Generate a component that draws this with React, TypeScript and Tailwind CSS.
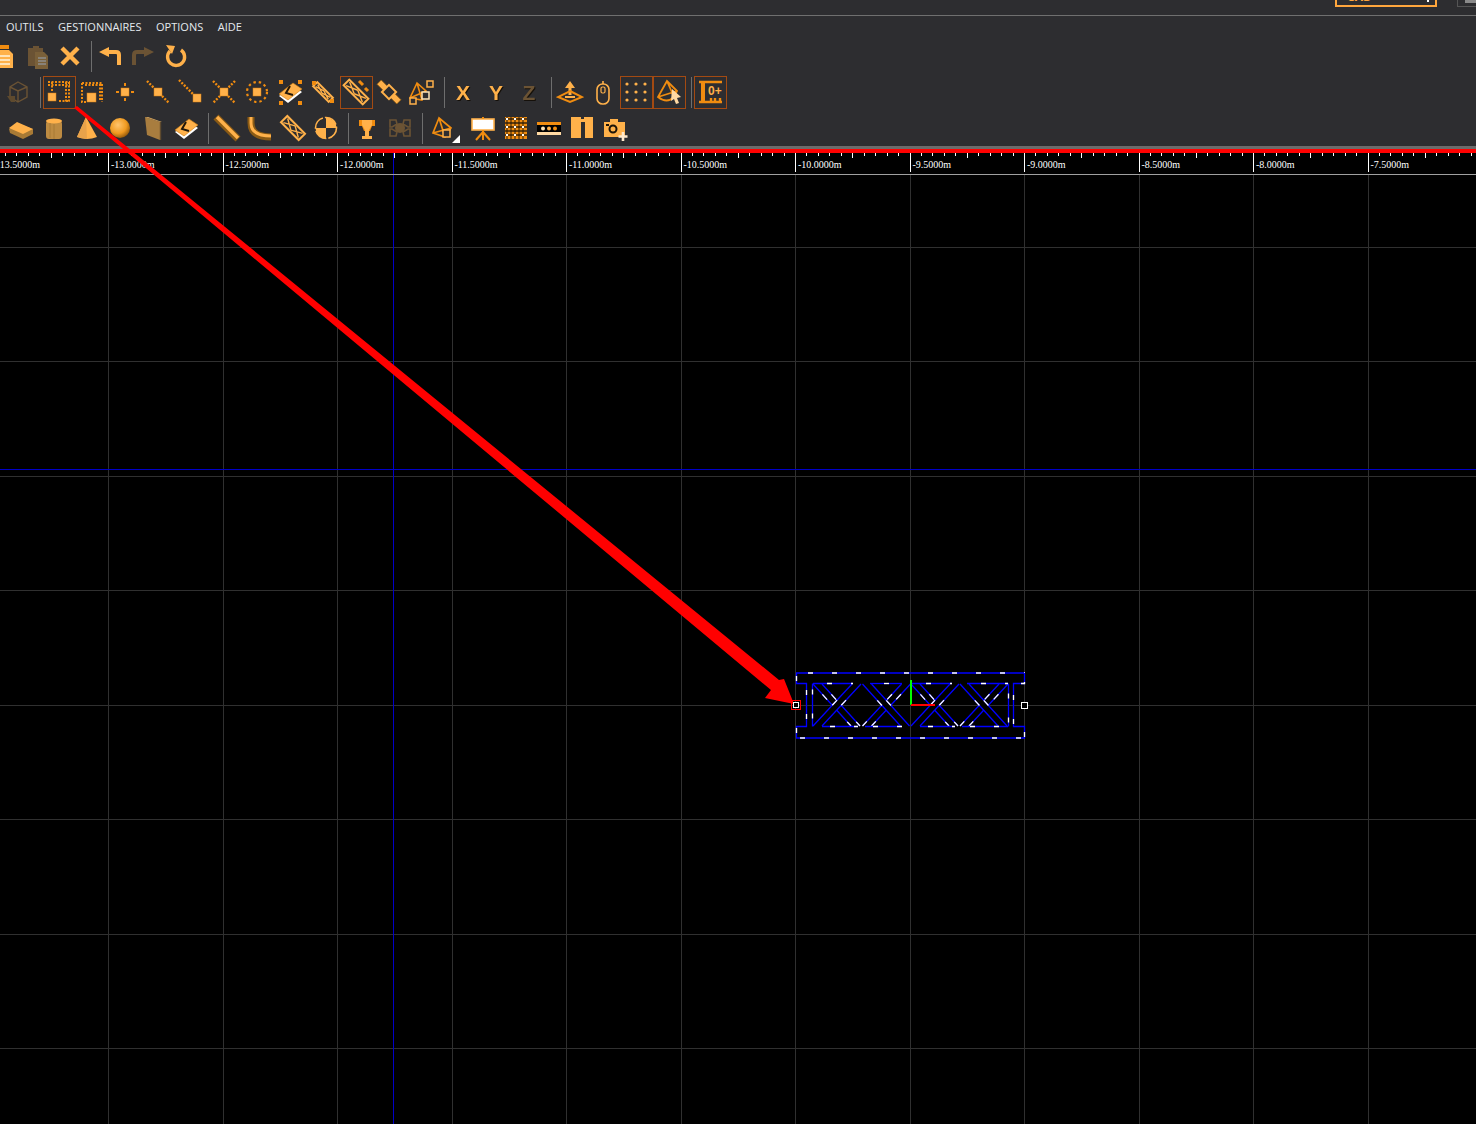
import type { ReactNode } from 'react';

const O = '#ffb14a';
const D = '#f08c10';
const B = '#6b5334';

const Ico = ({ children }: { children: ReactNode }) => (
  <svg viewBox="0 0 28 28" className="w-[28px] h-[28px] shrink-0">{children}</svg>
);

const Btn = ({ children, active, wide }: { children: ReactNode; active?: boolean; wide?: boolean }) => (
  <div className={`${wide ? 'w-[42px] justify-start pl-[5px]' : 'w-[33px] justify-center'} h-[33px] shrink-0 flex items-center border ${active ? 'border-[#a34a12]' : 'border-transparent'}`}>
    {children}
  </div>
);

const Sep = ({ tight }: { tight?: boolean }) => (
  <div className={`${tight ? 'w-[7px]' : 'w-[8px]'} h-[31px] shrink-0 flex justify-center pl-[3px]`}>
    <div className="w-px h-full bg-[#6e6e6e]" />
  </div>
);

const Letter = ({ c, off }: { c: string; off?: boolean }) => (
  <span className={`font-['Liberation_Sans'] font-bold text-[21px] leading-none drop-shadow-[1px_1px_0_#15100a] ${off ? 'text-[#6b5334]' : 'text-[#ffb14a]'}`}>{c}</span>
);

const Sq = ({ x, y, s = 8 }: { x: number; y: number; s?: number }) => <rect x={x} y={y} width={s} height={s} fill={O} stroke="#d98010" strokeWidth="0.5" />;
const Dot = (p: { d: string; w?: number }) => <path d={p.d} fill="none" stroke={D} strokeWidth={p.w ?? 2} strokeDasharray="2 1.5" />;

const Book = ({ corners }: { corners?: boolean }) => (
  <>
    <polygon points="3,18 17,8 26,14 12,25" fill="#fff" />
    <polygon points="3,16 17,5 26,11 12,22" fill={O} stroke="#c77a10" strokeWidth="0.6" />
    <path d="M14 8 L10 15 L17 17" fill="none" stroke="#23180a" strokeWidth="2" />
    {corners && (
      <>
        <rect x="3" y="2" width="4" height="4" fill={D} />
        <rect x="22" y="2" width="4" height="4" fill={D} />
        <rect x="3" y="23" width="4" height="4" fill={D} />
        <rect x="22" y="23" width="4" height="4" fill={D} />
      </>
    )}
  </>
);

// truss piece, drawn along the diagonal
const TrussIcon = ({ h = 10, len = 26 }: { h?: number; len?: number }) => {
  const l = 14 - len / 2;
  const r = 14 + len / 2;
  const t = 14 - h / 2 + 1.5;
  const b = 14 + h / 2 - 1.5;
  return (
    <g transform="rotate(45 14 14)">
      <rect x={l} y={14 - h / 2} width={len} height={h} fill="#2d2d30" stroke={O} strokeWidth="2" />
      <path d={`M${l + 2} ${t} L14 ${b} M14 ${t} L${l + 2} ${b} M14 ${t} L${r - 2} ${b} M${r - 2} ${t} L14 ${b}`} stroke={O} strokeWidth="1.4" />
    </g>
  );
};

const ConeOutline = () => (
  <path d="M12 3 L3 19 Q12 26 19 19 L22 13 Z M12 3 L19 19 M3 19 L22 13" fill="none" stroke={D} strokeWidth="1.8" />
);

function Toolbars() {
  return (
    <div className="flex flex-col">
      {/* row 1 */}
      <div className="h-[36px] flex items-center ml-[-12.5px]">
        <Btn>
          <Ico>
            <rect x="5" y="3" width="14" height="4" fill={D} />
            <path d="M5 8 H19 L23 12 V26 H5 Z" fill={O} />
            <path d="M9 14 H20 M9 18 H20 M9 22 H20" stroke="#fff3dd" strokeWidth="1.5" />
          </Ico>
        </Btn>
        <Btn>
          <Ico>
            <path d="M5 6 H10 V4 H16 V6 H20 V24 H5 Z" fill={B} />
            <path d="M12 10 H21 L25 14 V27 H12 Z" fill="#7a6039" />
            <path d="M15 16 H23 M15 19 H23 M15 22 H23" stroke="#8d8d8d" strokeWidth="1.5" />
          </Ico>
        </Btn>
        <Btn>
          <Ico>
            <path d="M6 6 L22 22 M22 6 L6 22" stroke={O} strokeWidth="4.4" />
          </Ico>
        </Btn>
        <Sep tight />
        <Btn>
          <Ico>
            <polygon points="3,10 13,5 13,15" fill={O} />
            <path d="M12 10 H20 Q23 10 23 13 V23" fill="none" stroke={O} strokeWidth="4" />
          </Ico>
        </Btn>
        <Btn>
          <Ico>
            <g transform="matrix(-1 0 0 1 28 0)">
              <polygon points="3,10 13,5 13,15" fill={B} />
              <path d="M12 10 H20 Q23 10 23 13 V23" fill="none" stroke={B} strokeWidth="4" />
            </g>
          </Ico>
        </Btn>
        <Btn>
          <Ico>
            <path d="M19 8 A8.5 8.5 0 1 1 8 9" fill="none" stroke={O} strokeWidth="3.4" />
            <polygon points="4,3 13,4 10,12" fill={O} />
          </Ico>
        </Btn>
      </div>
      {/* row 2 */}
      <div className="h-[36px] flex items-center ml-[1.5px]">
        <Btn>
          <Ico>
            <path d="M14 4 L23 9 V19 L14 24 L6 19 V9 Z M6 9 L14 13 L23 9 M14 13 V24" fill="none" stroke={B} strokeWidth="1.4" />
            <polygon points="3,18 11,18 11,24 7,24" fill="#5e4a2e" />
          </Ico>
        </Btn>
        <Sep />
        <Btn active>
          <Ico>
            <Dot d="M3 4 H25 M3 7 H25 M21 4 V25 M24 4 V25 M7 4 V14 M14 23 H25" />
            <Sq x={3} y={15} />
          </Ico>
        </Btn>
        <Btn>
          <Ico>
            <Dot d="M4 5 H24 V24 M4 5 V24 H9 M7 7 H22 V22" />
            <Sq x={9} y={15} s={9} />
          </Ico>
        </Btn>
        <Btn>
          <Ico>
            <Sq x={10} y={10} />
            <path d="M14 5 V8 M14 20 V23 M5 14 H8 M20 14 H23" stroke={D} strokeWidth="2" />
          </Ico>
        </Btn>
        <Btn>
          <Ico>
            <Dot d="M3 3 L10 10 M18 18 L25 25" w={2.4} />
            <Sq x={10} y={10} />
          </Ico>
        </Btn>
        <Btn>
          <Ico>
            <Dot d="M2 2 L16 16" w={2.4} />
            <Sq x={16} y={16} />
          </Ico>
        </Btn>
        <Btn>
          <Ico>
            <Dot d="M3 3 L10 10 M18 18 L25 25 M25 3 L18 10 M10 18 L3 25" w={2.4} />
            <Sq x={10} y={10} />
          </Ico>
        </Btn>
        <Btn>
          <Ico>
            <circle cx="14" cy="14" r="10" fill="none" stroke={D} strokeWidth="2.2" strokeDasharray="2.4 3" />
            <Sq x={10} y={10} />
          </Ico>
        </Btn>
        <Btn>
          <Ico>
            <Book corners />
          </Ico>
        </Btn>
        <Btn>
          <Ico>
            <TrussIcon h={6} len={22} />
            <rect x="3" y="3" width="4" height="4" fill={D} />
            <rect x="21" y="21" width="4" height="4" fill={D} />
          </Ico>
        </Btn>
        <Btn active>
          <Ico>
            <TrussIcon h={8} len={27} />
            <path d="M17 3 L21 7 M23 10 L26 13" stroke={D} strokeWidth="3" />
          </Ico>
        </Btn>
        <Btn>
          <Ico>
            <g transform="rotate(45 14 14)">
              <rect x="0" y="11" width="28" height="6" fill={O} stroke="#8a5a14" strokeWidth="0.8" />
            </g>
            <rect x="9" y="9" width="10" height="10" transform="rotate(45 14 14)" fill="#2d2d30" stroke={O} strokeWidth="2" />
          </Ico>
        </Btn>
        <Btn>
          <Ico>
            <path d="M9 5 L2 20 L14 22 L18 13 Z M9 5 L14 22 M2 20 L18 13" fill="none" stroke={D} strokeWidth="1.6" />
            <rect x="19" y="3" width="6" height="6" fill="#2d2d30" stroke={O} strokeWidth="1.5" />
            <rect x="14" y="14" width="7" height="7" fill="#2d2d30" stroke="#ffe3b5" strokeWidth="1.5" />
            <rect x="2" y="20" width="6" height="6" fill="#2d2d30" stroke={O} strokeWidth="1.5" />
          </Ico>
        </Btn>
        <Sep />
        <Btn><Letter c="X" /></Btn>
        <Btn><Letter c="Y" /></Btn>
        <Btn><Letter c="Z" off /></Btn>
        <Sep />
        <Btn>
          <Ico>
            <polygon points="14,3 19,10 15.5,10 15.5,17 12.5,17 12.5,10 9,10" fill={O} />
            <path d="M14 13 L26 19 L14 24 L2 19 Z" fill="none" stroke={D} strokeWidth="2" />
            <path d="M9 19 H19" stroke={O} strokeWidth="2" />
          </Ico>
        </Btn>
        <Btn>
          <Ico>
            <rect x="8" y="6" width="12" height="20" rx="5.5" fill="none" stroke={O} strokeWidth="1.6" />
            <path d="M14 3 V6" stroke={O} strokeWidth="1.6" />
            <rect x="12" y="9" width="4" height="6" rx="1.5" fill="none" stroke={O} strokeWidth="1.2" />
          </Ico>
        </Btn>
        <Btn active>
          <Ico>
            {[6, 14, 22].map((y) =>
              [5, 14, 23].map((x) => <circle key={`${x}-${y}`} cx={x} cy={y} r="1.6" fill={O} />)
            )}
          </Ico>
        </Btn>
        <Btn active>
          <Ico>
            <ConeOutline />
            <polygon points="17,11 26,19 22,20 24,25 21,26 19,21 16,23" fill="#ffd9a3" />
          </Ico>
        </Btn>
        <Sep />
        <Btn active>
          <Ico>
            <path d="M3 4 H26 M3 24 H26" stroke={D} strokeWidth="2.4" />
            <path d="M7 5 V24" stroke={D} strokeWidth="4" />
            <path d="M15 24 V20 M19 24 V20 M24 24 V20" stroke={D} strokeWidth="2.4" />
            <text x="12" y="17" className="font-['Liberation_Sans'] font-bold text-[12px]" fill={O}>0+</text>
          </Ico>
        </Btn>
      </div>
      {/* row 3 */}
      <div className="h-[36px] flex items-center ml-[4.5px]">
        <Btn>
          <Ico>
            <polygon points="2,15 10,9 26,15 26,20 16,25 3,19" fill="#a87a35" />
            <polygon points="2,14 10,8 26,15 16,20" fill={O} />
          </Ico>
        </Btn>
        <Btn>
          <Ico>
            <rect x="6" y="7" width="16" height="18" rx="3" fill="#bd8b42" />
            <ellipse cx="14" cy="7" rx="8" ry="2.6" fill={O} />
            <path d="M10 9 V24 M14 10 V25" stroke="#a87a35" strokeWidth="1" />
          </Ico>
        </Btn>
        <Btn>
          <Ico>
            <path d="M13 3 L4 23 Q14 27 24 23 Z" fill={O} />
            <path d="M13 3 L14 25 L4 23 Z" fill="#e8a24a" />
          </Ico>
        </Btn>
        <Btn>
          <Ico>
            <defs>
              <radialGradient id="sph" cx="0.4" cy="0.35" r="0.7">
                <stop offset="0" stopColor="#ffc56e" />
                <stop offset="0.6" stopColor="#f09a20" />
                <stop offset="1" stopColor="#8a5208" />
              </radialGradient>
            </defs>
            <circle cx="14" cy="14" r="10" fill="url(#sph)" />
          </Ico>
        </Btn>
        <Btn>
          <Ico>
            <polygon points="6,3 21,8 21,26 8,21" fill="#a87d3f" />
            <polygon points="6,3 9,3 23,8 21,8" fill="#d8a860" />
            <path d="M21.5 8 V26" stroke="#5e4a2e" strokeWidth="1.4" />
          </Ico>
        </Btn>
        <Btn>
          <Ico>
            <Book />
          </Ico>
        </Btn>
        <Sep />
        <Btn>
          <Ico>
            <path d="M3 3 L25 25" stroke="#8a5a14" strokeWidth="7" />
            <path d="M4 3 L25 24" stroke={O} strokeWidth="3.5" />
          </Ico>
        </Btn>
        <Btn>
          <Ico>
            <path d="M5 3 V9 Q5 23 25 23" fill="none" stroke="#8a5a14" strokeWidth="7" />
            <path d="M5 3 V9 Q5 22 25 22" fill="none" stroke={O} strokeWidth="3" />
          </Ico>
        </Btn>
        <Btn>
          <Ico>
            <TrussIcon h={9} len={25} />
          </Ico>
        </Btn>
        <Btn>
          <Ico>
            <circle cx="14" cy="14" r="10.5" fill="#2d2d30" stroke={O} strokeWidth="1.6" strokeDasharray="14 2" />
            <path d="M14 14 V3.5 A10.5 10.5 0 0 1 24.5 14 Z M14 14 V24.5 A10.5 10.5 0 0 1 3.5 14 Z" fill={O} />
          </Ico>
        </Btn>
        <Sep />
        <Btn>
          <Ico>
            <path d="M6 6 H22 V12 H19 L17 17 H11 L9 12 H6 Z" fill={D} />
            <path d="M9 6 H19 V11 L16 16 H12 L9 11 Z" fill={O} />
            <rect x="12" y="16" width="4" height="6" fill={O} />
            <rect x="9" y="22" width="10" height="3" fill={O} />
          </Ico>
        </Btn>
        <Btn>
          <Ico>
            <circle cx="14" cy="14" r="5" fill={B} />
            <path d="M4 6 H10 L11 10 L6 13 H4 Z M24 6 H18 L17 10 L22 13 H24 Z M4 22 H10 L11 18 L6 15 H4 Z M24 22 H18 L17 18 L22 15 H24 Z" fill="none" stroke={B} strokeWidth="1.6" />
          </Ico>
        </Btn>
        <Sep />
        <Btn wide>
          <div className="relative w-[28px] h-[28px]">
            <Ico>
              <path d="M8 4 L2 19 L14 23 L20 14 Z M8 4 L14 23 M2 19 L20 14" fill="none" stroke={D} strokeWidth="1.7" />
              <rect x="12" y="16" width="7" height="7" fill="#2d2d30" stroke={O} strokeWidth="1.5" />
            </Ico>
            <div className="absolute left-[21px] bottom-[-1px] w-0 h-0 border-l-[8px] border-l-transparent border-b-[8px] border-b-white" />
          </div>
        </Btn>
        <Btn>
          <Ico>
            <rect x="3" y="5" width="22" height="11" fill="#fff" stroke={O} strokeWidth="1.6" />
            <path d="M14 3 V5 M14 16 V26 M14 18 L7 26 M14 18 L21 26" stroke={D} strokeWidth="2" />
          </Ico>
        </Btn>
        <Btn>
          <Ico>
            <rect x="3" y="3" width="22" height="22" fill={D} />
            {[5, 9, 13, 17, 21].map((y) => <path key={y} d={`M3 ${y} H25`} stroke="#2a1c08" strokeWidth="1.4" />)}
            {[5, 9, 13, 17, 21].map((x) => <path key={x} d={`M${x} 3 V25`} stroke="#2a1c08" strokeWidth="1" />)}
            {[5, 13, 21].map((y) => [5, 13, 21].map((x) => <rect key={`${x}-${y}`} x={x - 1} y={y - 1} width="2" height="2" fill="#fff" />))}
          </Ico>
        </Btn>
        <Btn>
          <Ico>
            <rect x="2" y="8" width="24" height="13" fill="#000" />
            <rect x="2" y="8" width="24" height="3" fill={D} />
            <rect x="2" y="18" width="24" height="3" fill="#ffd9a3" />
            <circle cx="8" cy="14.5" r="2" fill="#ffe3b5" />
            <circle cx="14" cy="14.5" r="2" fill={O} />
            <circle cx="20" cy="14.5" r="2" fill={D} />
          </Ico>
        </Btn>
        <Btn>
          <Ico>
            <path d="M3 3 H13 V5 H16 V3 H25 V24 H17 V8 H13 V24 H3 Z" fill={O} />
          </Ico>
        </Btn>
        <Btn>
          <Ico>
            <path d="M3 8 H9 V5 H17 V8 H24 V23 H3 Z" fill={O} />
            <circle cx="12" cy="15" r="3.5" fill={O} stroke="#1d1408" strokeWidth="2" />
            <rect x="5" y="10" width="3" height="2" fill="#1d1408" />
            <path d="M22 18 V27 M17.5 22.5 H26.5" stroke="#ffe9cc" strokeWidth="2.6" />
          </Ico>
        </Btn>
      </div>
    </div>
  );
}

const PITCH = 114.5;
const majors = Array.from({ length: 13 }, (_, i) => -6 + i * PITCH);
const labels = ['-13.5000m', '-13.0000m', '-12.5000m', '-12.0000m', '-11.5000m', '-11.0000m', '-10.5000m', '-10.0000m', '-9.5000m', '-9.0000m', '-8.5000m', '-8.0000m', '-7.5000m'];
const px = (n: number) => Math.floor(n) + 0.5;

function Ruler() {
  const ticks: number[] = [];
  for (let i = 0; i < 140; i++) ticks.push(i);
  return (
    <svg viewBox="0 153 1476 22" className="block w-[1476px] h-[22px] shrink-0 bg-black" shapeRendering="crispEdges">
      {ticks.map((i) => {
        const x = px(-6 + (i * PITCH) / 10);
        if (i % 10 === 0) return null;
        return <path key={i} d={`M${x} 153 V${i % 5 === 0 ? 158 : 156}`} stroke="#fff" />;
      })}
      {majors.map((m, i) => (
        <g key={i}>
          <path d={`M${px(m)} 153 V172`} stroke="#fff" />
          <text x={m + 2.4} y={168} fill="#fff" className="font-['Liberation_Serif'] text-[10px]" shapeRendering="auto">{labels[i]}</text>
        </g>
      ))}
      <path d="M393.5 153 V174" stroke="#0000c8" />
      <path d="M0 174.5 H1476" stroke="#a0a0a0" />
    </svg>
  );
}

// each brace: left edge, which diagonal pair lies on top, top and bottom chord pieces
const crosses = [
  { x: 813, slashOver: true, top: [813, 853], bottom: [822, 858] },
  { x: 862.5, slashOver: false, top: [870, 902], bottom: [865, 902] },
  { x: 911, slashOver: true, top: [912, 952], bottom: [920, 955] },
  { x: 960, slashOver: false, top: [967, 1008], bottom: [962, 1008] },
];

const Line = ({ d, dash = '5 19', off = 0, w = 1.3 }: { d: string; dash?: string; off?: number; w?: number }) => (
  <>
    <path d={d} fill="none" stroke="#0000ff" strokeWidth={w} />
    <path d={d} fill="none" stroke="#fff" strokeWidth={w} strokeDasharray={dash} strokeDashoffset={off} />
  </>
);

function Cross({ x, slashOver, top, bottom }: { x: number; slashOver: boolean; top: number[]; bottom: number[] }) {
  const t = 684;
  const b = 726;
  const back = `M${x} ${t} L${x + 38} ${b} M${x + 9} ${t} L${x + 47} ${b}`;
  const slash = `M${x + 39} ${t} L${x} ${b} M${x + 48} ${t} L${x + 9} ${b}`;
  const over = slashOver ? slash : back;
  const under = slashOver ? back : slash;
  const mask = slashOver
    ? `${x + 39},${t} ${x + 48},${t} ${x + 9},${b} ${x},${b}`
    : `${x},${t} ${x + 9},${t} ${x + 47},${b} ${x + 38},${b}`;
  return (
    <g>
      <Line d={under} dash="7 30" off={-14} />
      <polygon points={mask} fill="#000" />
      <Line d={over} dash="7 30" off={-22} />
      <Line d={`M${top[0]} 683.5 H${top[1]}`} off={-14} />
      <Line d={`M${bottom[0]} 726.5 H${bottom[1]}`} off={-8} />
    </g>
  );
}

function Viewport() {
  const hs = [247, 361, 476, 590, 705, 819, 934, 1048];
  return (
    <svg viewBox="0 175 1476 949" className="block w-[1476px] h-[949px] bg-black">
      <g shapeRendering="crispEdges">
        {majors.map((m) => <path key={m} d={`M${px(m)} 175 V1124`} stroke="#303030" />)}
        {hs.map((y) => <path key={y} d={`M0 ${y + 0.5} H1476`} stroke="#303030" />)}
        <path d="M393.5 175 V1124 M0 469.5 H1476" stroke="#0000c8" />
      </g>
      {/* truss outline */}
      <Line d="M796 673 H1025" w={1.7} off={-12} />
      <Line d="M796 738 H1025" w={1.7} off={-4} />
      <Line d="M796.5 673 V683.5 H806.5 V726.5 H796.5 V738" off={-3} />
      <Line d="M1024.5 673 V683.5 H1013.5 V726.5 H1024.5 V738" off={-9} />
      <Line d="M812.5 683.5 V726.5" off={-6} />
      <Line d="M1008.5 683.5 V726.5" off={-10} />
      {crosses.map((c) => <Cross key={c.x} {...c} />)}
      <path d="M910.5 680 V705" stroke="#00ff00" strokeWidth="2" shapeRendering="crispEdges" />
      <path d="M911 704.5 H935" stroke="#ff0000" strokeWidth="2" shapeRendering="crispEdges" />
      <rect x="1021.5" y="702.5" width="6" height="6" fill="#000" stroke="#fff" shapeRendering="crispEdges" />
    </svg>
  );
}

export default function App() {
  return (
    <div className="relative w-[1476px] h-[1124px] overflow-hidden bg-[#2d2d30] flex flex-col font-['Open_Sans',sans-serif]">
      <div className="h-[16px] shrink-0 flex justify-end items-start border-b border-[#6f6f6f]">
        <div className="w-[102px] h-[7px] border-x-2 border-b-2 border-[#ffa63d] mr-[20px] overflow-hidden flex justify-between pr-[6px] pl-[10px]">
          <span className="block mt-[-10px] text-[12px] leading-[14px] font-bold text-[#ffa63d]">CAD</span>
          <span className="block w-[2px] h-[2px] mt-0 bg-white" />
        </div>
        <div className="w-[19px] h-[7px] border-l border-b border-[#555] pl-[7px]">
          <div className="h-[3px] bg-[#8a8a8a]" />
        </div>
      </div>
      <nav className="h-[22px] shrink-0 flex items-center gap-[14.6px] pl-[6px] text-[11px] text-[#e4e9ee]">
        <span>OUTILS</span>
        <span>GESTIONNAIRES</span>
        <span>OPTIONS</span>
        <span>AIDE</span>
      </nav>
      <Toolbars />
      <div className="h-[3px] shrink-0 bg-[#6b6b6b]" />
      <div className="h-[4px] shrink-0 bg-[#ff0000]" />
      <Ruler />
      <Viewport />
      {/* annotation arrow lying over the window */}
      <svg viewBox="0 0 1476 1124" className="absolute inset-0 w-[1476px] h-[1124px] pointer-events-none">
        <polygon points="74,108 77,106 779,680 784,679 794,704 765,698 771,690" fill="#ff0000" />
        <rect x="791.5" y="700.5" width="9" height="9" fill="none" stroke="#ff0000" shapeRendering="crispEdges" />
        <rect x="793.5" y="702.5" width="5" height="5" fill="#000" stroke="#fff" shapeRendering="crispEdges" />
      </svg>
    </div>
  );
}
